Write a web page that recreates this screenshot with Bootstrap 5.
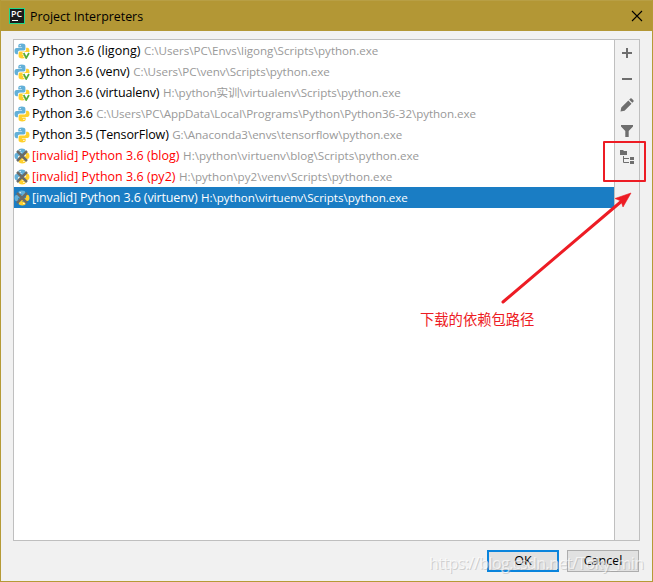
<!DOCTYPE html>
<html lang="en">
<head>
<meta charset="utf-8">
<title>Project Interpreters</title>
<meta name="viewport" content="width=device-width, initial-scale=1">
<link href="https://cdn.jsdelivr.net/npm/bootstrap@5.3.0/dist/css/bootstrap.min.css" rel="stylesheet">
<style>
body{font-family:"Open Sans","Noto Sans","Noto Sans CJK SC",sans-serif;font-size:12.5px;line-height:21px;color:#000}
.dialog{width:653px;height:582px;background:#f1f1f1;border:1px solid #b59a36;border-top:0}
.titlebar{height:31px;background:#b39735;border-top:1px solid #b89f45;padding:0 9px 0 8px}
.titlebar .caption{font-size:12.4px;margin-left:5px}
.pane{margin:8px 12px 0 12px;height:502px;border:1px solid #bfbfbf}
.entries{background:#fff;border-right:1px solid #bfbfbf}
.entry{height:21px;white-space:nowrap}
.entry svg{width:16px;height:16px;flex:none;margin-right:2px}
.entry .title{letter-spacing:-.12px}
.entry .path{color:#999;font-size:11.6px;letter-spacing:-.06px;margin-left:3.500px}
.entry:first-child .title{letter-spacing:.05px}
.entry:first-child .path{letter-spacing:-.02px}
.entry.invalid .title{color:#f00;letter-spacing:.02px}
.entry.invalid .path{letter-spacing:.02px}
.entry.selected,.entry.selected .title,.entry.selected .path{background:#1a7dc4;color:#fff}
.entry.selected .title{letter-spacing:-.13px}
.entry.selected .path{letter-spacing:-.02px}
.tools{width:24px;padding-top:5px}
.tools svg{width:16px;height:16px;margin-bottom:10px;flex:none}
.actions{margin:9px 13px 0 0;gap:8px}
.action{width:72px;height:22px;padding:0;border:1px solid #adadad;border-radius:0;background:#e1e1e1;font-size:12.5px;line-height:20px;color:#000}
.action.main{border:2px solid #0a84dc;line-height:18px}
.overlay{left:-1px;top:0;pointer-events:none}
.overlay .note{font-family:"Noto Sans CJK SC",sans-serif;font-weight:400}
.overlay .stamp{font-family:"Open Sans","Noto Sans",sans-serif}
</style>
</head>
<body class="m-0 overflow-hidden">
<svg width="0" height="0" class="position-absolute">
<defs>
<g id="py">
<path fill="#63b0d8" d="M7.800.5C5.400.5 4.300 1.300 4.300 2.700v1.700h3.800v.7H2.700C1.100 5.100.5 6.400.5 8s.7 3.200 2.100 3.200h1.300V9.500c0-1.200.8-2.100 2-2.100h3.800c1 0 1.700-.7 1.700-1.700v-3c0-1.300-1.300-2.200-3.600-2.200z"/>
<path fill="#ffd02c" d="M8.200 15.500c2.400 0 3.500-.8 3.500-2.200v-1.700H7.900v-.7h5.400c1.600 0 2.200-1.300 2.200-2.900s-.7-3.200-2.100-3.200h-1.300v1.700c0 1.200-.8 2.100-2 2.100H6.300c-1 0-1.700.7-1.700 1.700v3c0 1.300 1.300 2.200 3.600 2.200z"/>
<circle cx="6.200" cy="2.600" r=".7" fill="#fff"/><circle cx="9.900" cy="13.400" r=".7" fill="#fff"/>
</g>
<g id="pyv"><use href="#py"/><path d="M8.300 9H16v7h-5z" fill="#fff"/><path d="M9.700 10l2.500 5 2.800-5" fill="none" stroke="#57ad3a" stroke-width="1.700"/></g>
<g id="pyx"><use href="#py"/><path d="M3 3l10 10M13 3L3 13" stroke="#6b6b66" stroke-width="2.500"/></g>
</defs>
</svg>
<main class="dialog position-relative d-flex flex-column">
<header class="titlebar d-flex align-items-center">
<svg width="16" height="16" viewBox="0 0 16 16"><rect width="16" height="16" fill="#21d789"/><rect x="1" y="1" width="14" height="14" fill="#1a1a1a"/><text x="2" y="8.500" font-family="Open Sans,sans-serif" font-weight="600" font-size="8.500" textLength="11" lengthAdjust="spacingAndGlyphs" fill="#fff">PC</text><path d="M3 12.500h6" stroke="#fff"/></svg>
<span class="caption">Project Interpreters</span>
<svg class="ms-auto" width="12" height="12" viewBox="0 0 12 12"><path d="M1 1l10 10M11 1L1 11" stroke="#000" stroke-width="1.100"/></svg>
</header>
<section class="pane d-flex">
<div class="entries flex-grow-1">
<div class="entry d-flex align-items-center"><svg viewBox="0 0 16 16"><use href="#pyv"/></svg><span class="title">Python 3.6 (ligong)</span><span class="path">C:\Users\PC\Envs\ligong\Scripts\python.exe</span></div>
<div class="entry d-flex align-items-center"><svg viewBox="0 0 16 16"><use href="#pyv"/></svg><span class="title">Python 3.6 (venv)</span><span class="path">C:\Users\PC\venv\Scripts\python.exe</span></div>
<div class="entry d-flex align-items-center"><svg viewBox="0 0 16 16"><use href="#pyv"/></svg><span class="title">Python 3.6 (virtualenv)</span><span class="path">H:\python实训\virtualenv\Scripts\python.exe</span></div>
<div class="entry d-flex align-items-center"><svg viewBox="0 0 16 16"><use href="#py"/></svg><span class="title">Python 3.6</span><span class="path">C:\Users\PC\AppData\Local\Programs\Python\Python36-32\python.exe</span></div>
<div class="entry d-flex align-items-center"><svg viewBox="0 0 16 16"><use href="#py"/></svg><span class="title">Python 3.5 (TensorFlow)</span><span class="path">G:\Anaconda3\envs\tensorflow\python.exe</span></div>
<div class="entry invalid d-flex align-items-center"><svg viewBox="0 0 16 16"><use href="#pyx"/></svg><span class="title">[invalid] Python 3.6 (blog)</span><span class="path">H:\python\virtuenv\blog\Scripts\python.exe</span></div>
<div class="entry invalid d-flex align-items-center"><svg viewBox="0 0 16 16"><use href="#pyx"/></svg><span class="title">[invalid] Python 3.6 (py2)</span><span class="path">H:\python\py2\venv\Scripts\python.exe</span></div>
<div class="entry invalid selected d-flex align-items-center"><svg viewBox="0 0 16 16"><use href="#pyx"/></svg><span class="title">[invalid] Python 3.6 (virtuenv)</span><span class="path">H:\python\virtuenv\Scripts\python.exe</span></div>
</div>
<div class="tools d-flex flex-column align-items-center">
<svg viewBox="0 0 16 16"><path d="M8 3v10M3 8h10" stroke="#6e6e6e" stroke-width="2"/></svg>
<svg viewBox="0 0 16 16"><path d="M3 8h10" stroke="#6e6e6e" stroke-width="2"/></svg>
<svg viewBox="0 0 16 16"><path d="M1.500 14.500l.8-4 7-7 3.200 3.200-7 7zM10.200 2.700l1.100-1.100q.7-.6 1.400 0l1.700 1.700q.6.700 0 1.400l-1.100 1.100z" fill="#6e6e6e"/></svg>
<svg viewBox="0 0 16 16"><path d="M2 2h12v1.500L9.700 8v6H6.300V8L2 3.500z" fill="#6e6e6e"/></svg>
<svg viewBox="0 0 16 16"><path d="M1 1h3l1 1h3v4H1z" fill="#6e6e6e"/><path d="M4.500 7v6.500H10M4.500 9.500H10" fill="none" stroke="#6e6e6e"/><path d="M11 8h4v3h-4zM11 12h4v3h-4z" fill="#6e6e6e"/></svg>
</div>
</section>
<footer class="actions d-flex justify-content-end">
<button class="btn action main">OK</button><button class="btn action">Cancel</button>
</footer>
<svg class="overlay position-absolute" width="653" height="582" viewBox="0 0 653 582">
<rect x="604" y="142" width="41" height="39" fill="none" stroke="#ed1c24" stroke-width="2" stroke-linejoin="round"/>
<path d="M503 302L623 200" stroke="#ed1c24" stroke-width="3" stroke-linecap="round"/>
<path d="M631 193l-8 14-2-6-6-2.500z" fill="#ed1c24" stroke="#ed1c24" stroke-width=".6"/>
<text class="note" x="420" y="325" font-size="14.300" fill="#ed1c24">下载的依赖包路径</text>
<text class="stamp" x="430" y="570" font-size="16" textLength="215" fill="#999" fill-opacity=".4">https://blog.csdn.net/Toky_min</text>
<text class="stamp" x="429" y="569" font-size="16" textLength="215" fill="#fff" fill-opacity=".65">https://blog.csdn.net/Toky_min</text>
</svg>
</main>
<script src="https://cdn.jsdelivr.net/npm/bootstrap@5.3.0/dist/js/bootstrap.bundle.min.js"></script>
</body>
</html>
